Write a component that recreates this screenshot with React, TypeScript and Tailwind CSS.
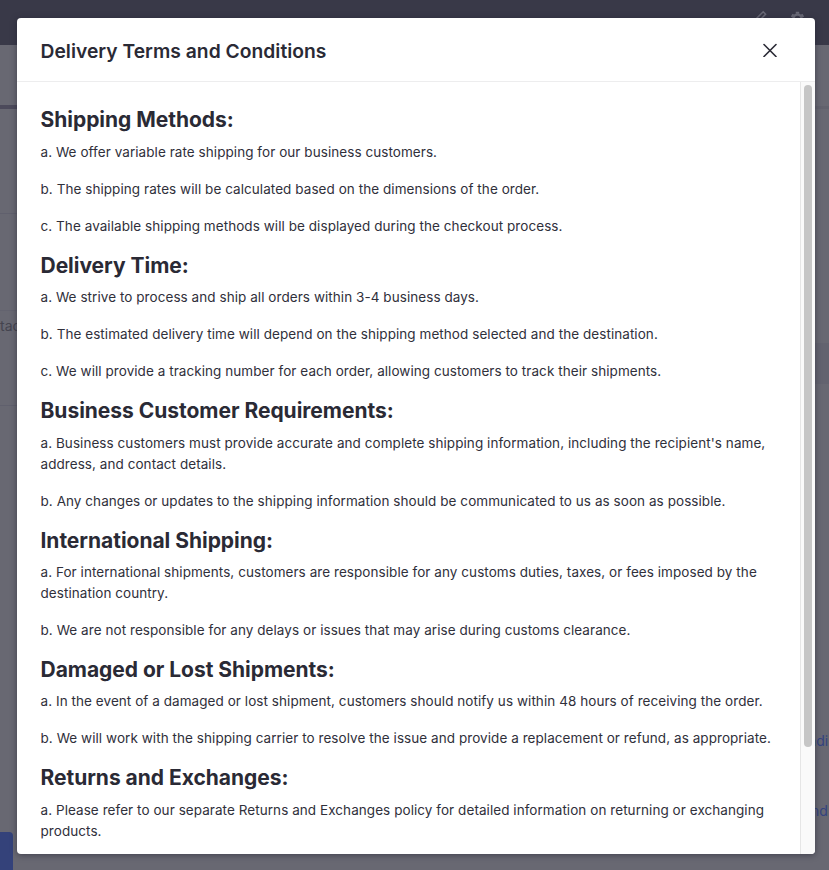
import React from "react";

type Section = { title: string; items: string[] };

const sections: Section[] = [
  {
    title: "Shipping Methods:",
    items: [
      "a. We offer variable rate shipping for our business customers.",
      "b. The shipping rates will be calculated based on the dimensions of the order.",
      "c. The available shipping methods will be displayed during the checkout process.",
    ],
  },
  {
    title: "Delivery Time:",
    items: [
      "a. We strive to process and ship all orders within 3-4 business days.",
      "b. The estimated delivery time will depend on the shipping method selected and the destination.",
      "c. We will provide a tracking number for each order, allowing customers to track their shipments.",
    ],
  },
  {
    title: "Business Customer Requirements:",
    items: [
      "a. Business customers must provide accurate and complete shipping information, including the recipient's name, address, and contact details.",
      "b. Any changes or updates to the shipping information should be communicated to us as soon as possible.",
    ],
  },
  {
    title: "International Shipping:",
    items: [
      "a. For international shipments, customers are responsible for any customs duties, taxes, or fees imposed by the destination country.",
      "b. We are not responsible for any delays or issues that may arise during customs clearance.",
    ],
  },
  {
    title: "Damaged or Lost Shipments:",
    items: [
      "a. In the event of a damaged or lost shipment, customers should notify us within 48 hours of receiving the order.",
      "b. We will work with the shipping carrier to resolve the issue and provide a replacement or refund, as appropriate.",
    ],
  },
  {
    title: "Returns and Exchanges:",
    items: [
      "a. Please refer to our separate Returns and Exchanges policy for detailed information on returning or exchanging products.",
    ],
  },
];

function Backdrop() {
  return (
    <div className="flex h-full flex-col bg-[#686872] text-[14px] leading-[21px]">
      <div className="flex h-[45px] shrink-0 items-start justify-end gap-[22px] bg-[#393948] pt-[10px] pr-[24px] text-[#696976]">
        <svg width="15" height="15" viewBox="0 0 15 15" fill="none" stroke="currentColor" strokeWidth="1.5">
          <path d="M2 12.5l1-3.5 7.2-7.2 2.4 2.4L5.500 11.500z" />
        </svg>
        <svg width="15" height="15" viewBox="0 0 15 15" fill="none" stroke="currentColor">
          <circle cx="7.500" cy="8.500" r="4" strokeWidth="2.500" />
          <path d="M7.500 1.800v2M7.500 13.200v2M1.700 5.150l1.700 1M11.600 10.850l1.700 1M1.700 11.850l1.700-1M11.600 6.150l1.700-1" strokeWidth="3.400" />
        </svg>
      </div>
      <div className="flex h-[64px] shrink-0 items-end">
        <div className="h-[4px] w-[400px] bg-[#4c4a5b]" />
        <div className="h-[3px] flex-1 bg-[#62626d]" />
      </div>
      <div className="flex flex-1 justify-between">
        <div className="flex w-[400px] flex-col">
          <div className="h-[105px] border-b border-[#60606d]" />
          <div className="h-[97px] border-b border-[#63636f]" />
          <div className="h-[95px] border-b border-[#60606d] pt-[4px] text-[#44444f]">tact</div>
          <div className="flex-1" />
          <div className="h-[38px] w-[13px] rounded-tr-[4px] bg-[#34427a]" />
        </div>
        <div className="flex w-[16px] flex-col overflow-hidden text-[#344480]">
          <div className="mt-[234px] h-[41px] shrink-0 bg-[#63636f]" />
          <div className="mt-[346px] -ml-[5px] whitespace-nowrap">ndi</div>
          <div className="mt-[49px] -ml-[2px] whitespace-nowrap">nd</div>
        </div>
      </div>
    </div>
  );
}

function CloseIcon() {
  return (
    <svg width="14" height="14" viewBox="0 0 14 14" fill="none" stroke="#2b2b36" strokeWidth="1.600" strokeLinecap="round">
      <path d="M1 1.500l12 12M13 1.500L1 13.500" />
    </svg>
  );
}

export default function App() {
  return (
    <div className="relative h-[870px] w-[829px] overflow-hidden font-['Inter',sans-serif] text-[#2a2a35]">
      <Backdrop />
      <div className="absolute top-[18px] left-[17px] flex h-[835.5px] w-[798px] flex-col overflow-hidden rounded-[4px] bg-white shadow-[0_1px_6px_rgba(30,30,45,0.55)]">
        <header className="flex h-[64px] shrink-0 items-center justify-between border-b border-[#ededee] pt-[1px] pr-[38px] pl-[23.5px]">
          <h1 className="pt-[2px] text-[19.25px] leading-[24px] font-semibold tracking-[0.02px]">Delivery Terms and Conditions</h1>
          <button type="button" aria-label="Close">
            <CloseIcon />
          </button>
        </header>
        <div className="flex min-h-0 flex-1">
          <main className="min-w-0 flex-1 overflow-hidden pt-[25.4px] pr-[24px] pl-[23.5px]">
            {sections.map((section) => (
              <section key={section.title}>
                <h2 className="mb-[8px] text-[21px] leading-[26.4px] font-bold tracking-[-0.03px]">{section.title}</h2>
                {section.items.map((item) => (
                  <p key={item} className="mb-[16px] text-[13.5px] leading-[21px] tracking-[0.06px] text-[#30303b]">
                    {item}
                  </p>
                ))}
              </section>
            ))}
          </main>
          <div className="flex w-[15px] justify-center border-l border-[#e6e6e6] bg-[#fafafa] pt-[3px]">
            <div className="h-[662px] w-[8px] rounded-full bg-[#c6c6c6]" />
          </div>
        </div>
      </div>
    </div>
  );
}
